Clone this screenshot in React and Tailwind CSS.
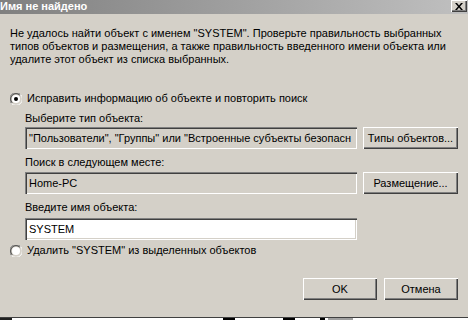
import React from 'react'

const raised = 'shadow-[inset_1px_1px_0_#ffffff,inset_-1px_-1px_0_#404040,inset_-2px_-2px_0_#808080]'
const sunken = 'shadow-[inset_1px_1px_0_#808080,inset_2px_2px_0_#404040,inset_-1px_-1px_0_#ffffff,inset_-2px_-2px_0_#d4d0c8]'

const Radio = ({ checked }) => (
  <svg width="12" height="12" viewBox="0 0 12 12" className="shrink-0">
    <path d="M10.5 1.5 A6 6 0 0 0 1.5 10.5" fill="none" stroke="#808080" strokeWidth="1" />
    <path d="M9.8 2.2 A5 5 0 0 0 2.2 9.8" fill="none" stroke="#404040" strokeWidth="1" />
    <path d="M1.5 10.5 A6 6 0 0 0 10.5 1.5" fill="none" stroke="#ffffff" strokeWidth="1" />
    <circle cx="6" cy="6" r="4" fill="#ffffff" />
    {checked && <circle cx="6" cy="6" r="2" fill="#000000" />}
  </svg>
)

const Button = ({ children, className = '' }) => (
  <div className={`h-[22px] bg-[#d4d0c8] flex items-center justify-center ${raised} ${className}`}>
    {children}
  </div>
)

const Field = ({ children, white }) => (
  <div className={`h-[22px] w-[332px] px-[4px] flex items-center overflow-hidden whitespace-nowrap ${white ? 'bg-white' : 'bg-[#d4d0c8]'} ${sunken}`}>
    {children}
  </div>
)

export default function App() {
  return (
    <div className="w-[468px] h-[320px] bg-[#d4d0c8] flex flex-col text-[11px] leading-[13px] text-black overflow-hidden font-['Liberation_Sans',sans-serif]">
      {/* Title bar */}
      <div className="h-[14px] flex items-start justify-between bg-gradient-to-r from-[#808080] to-[#c0c0c0] shrink-0">
        <span className="text-white font-bold leading-[13px]">Имя не найдено</span>
        <div className={`w-[16px] h-[12px] mr-[1px] bg-[#d4d0c8] flex items-center justify-center ${raised}`}>
          <svg width="8" height="7" viewBox="0 0 8 7">
            <path d="M0 0h2l2 2.5L6 0h2L5 3.5 8 7H6L4 4.5 2 7H0l3-3.5z" fill="#000" />
          </svg>
        </div>
      </div>

      <div className="pl-[10px] flex flex-col">
        <p className="mt-[13px] w-[450px]">
          Не удалось найти объект с именем "SYSTEM". Проверьте правильность выбранных типов объектов и размещения, а также правильность введенного имени объекта или удалите этот объект из списка выбранных.
        </p>

        <div className="mt-[26px] flex items-center gap-[5px] h-[13px]">
          <Radio checked />
          <span>Исправить информацию об объекте и повторить поиск</span>
        </div>

        <div className="pl-[15px] flex flex-col">
          <span className="mt-[7px]">Выберите тип объекта:</span>
          <div className="mt-[2px] flex gap-[6px]">
            <Field>"Пользователи", "Группы" или "Встроенные субъекты безопасн</Field>
            <Button className="w-[95px]">Типы объектов...</Button>
          </div>

          <span className="mt-[7px]">Поиск в следующем месте:</span>
          <div className="mt-[3px] flex gap-[6px]">
            <Field>Home-PC</Field>
            <Button className="w-[95px]">Размещение...</Button>
          </div>

          <span className="mt-[7px]">Введите имя объекта:</span>
          <div className="mt-[4px]">
            <Field white>SYSTEM</Field>
          </div>
        </div>

        <div className="mt-[4px] flex items-center gap-[5px] h-[13px]">
          <Radio />
          <span>Удалить "SYSTEM" из выделенных объектов</span>
        </div>

        <div className="mt-[21px] flex justify-end gap-[7px] pr-[10px]">
          <Button className="w-[74px]">OK</Button>
          <Button className="w-[74px]">Отмена</Button>
        </div>
      </div>

      <div className="mt-auto h-[1px] bg-[#404040] shrink-0" />
      <div className="h-[2px] flex shrink-0 bg-white">
        <div className="w-[12px] bg-[#202020]" />
        <div className="ml-[211px] w-[12px] bg-black" />
        <div className="ml-[48px] w-[12px] bg-black" />
        <div className="ml-[25px] w-[5px] bg-black" />
        <div className="ml-[3px] w-[25px] bg-[#a0a0a0]" />
      </div>
    </div>
  )
}
